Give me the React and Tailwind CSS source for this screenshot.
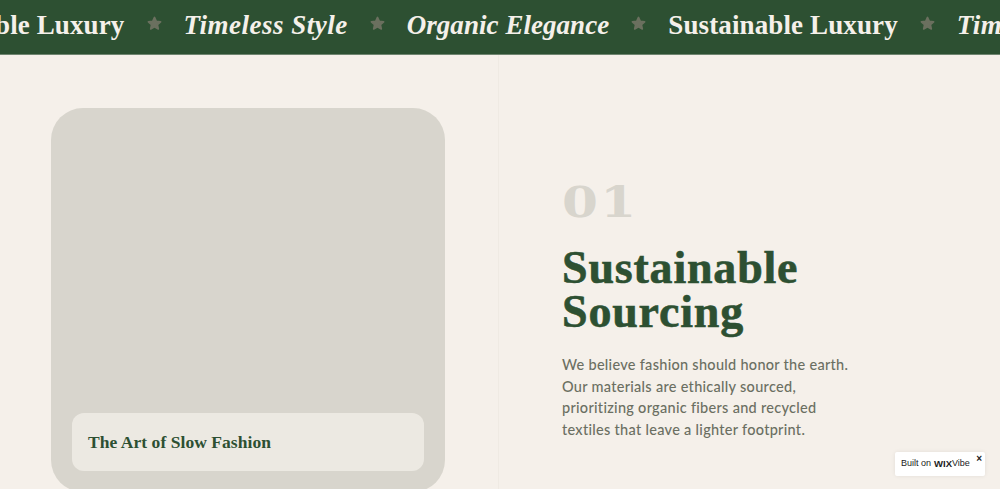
import React from 'react';

const serif = "font-['Liberation_Serif',serif]";

function Star() {
    return (
        <svg viewBox="0 0 24 24" className="w-[15px] h-[15px] shrink-0 -mt-[7px] fill-[#6b705f]">
            <path d="M12 2.2l2.9 6.3 6.9.8-5.1 4.7 1.4 6.8L12 17.4l-6.1 3.4 1.4-6.8-5.1-4.7 6.9-.8z" stroke="#6b705f" strokeWidth="2.6" strokeLinejoin="round" />
        </svg>
    );
}

function Phrase({ children, className }) {
    return (
        <span className={`${serif} shrink-0 whitespace-nowrap text-[27px] leading-[32px] -mt-[5px] font-bold text-[#f5f0ea] ${className}`}>
            {children}
        </span>
    );
}

function Marquee() {
    return (
        <div className="h-[55px] bg-[#2d5032] border-b border-[#6f8570] overflow-hidden flex items-center">
            <div className="flex items-center gap-[22px] -ml-[105px]">
                <Phrase className="tracking-[0.12px]">Sustainable Luxury</Phrase>
                <Star />
                <Phrase className="italic tracking-[0.5px]">Timeless Style</Phrase>
                <Star />
                <Phrase className="italic tracking-[0.05px]">Organic Elegance</Phrase>
                <Star />
                <Phrase className="tracking-[0.12px]">Sustainable Luxury</Phrase>
                <Star />
                <Phrase className="italic tracking-[0.5px]">Timeless Style</Phrase>
            </div>
        </div>
    );
}

export default function App() {
    return (
        <div className="relative h-[489px] overflow-hidden bg-[#f5f0ea]">
            <Marquee />
            <div className="flex h-[434px]">
                {/* Image column */}
                <div className="w-[499px] shrink-0 border-r border-[#efeae3] pt-[53px] pl-[51px]">
                    <div className="w-[394px] h-[384px] rounded-[32px] bg-[#d8d5cd] flex flex-col justify-end px-[21px] pb-[21px]">
                        <div className="h-[58px] rounded-[12px] bg-[#ece9e2] flex items-center pl-[16px]">
                            <span className={`${serif} text-[17.5px] font-bold tracking-[0.05px] text-[#2d5032]`}>The Art of Slow Fashion</span>
                        </div>
                    </div>
                </div>

                {/* Copy column */}
                <div className="flex-1 pl-[63px] pt-[118px]">
                    <div className="font-['DejaVu_Serif',serif] text-[43px] leading-[58px] font-bold text-[#d8d5cd] tracking-[2px] origin-left scale-x-[1.2]">01</div>
                    <h2 className={`${serif} mt-[15px] text-[46px] leading-[44px] font-bold tracking-[0.8px] text-[#2d5032] [-webkit-text-stroke:0.6px_#2d5032]`}>
                        Sustainable<br />Sourcing
                    </h2>
                    <p className="mt-[20px] w-[300px] font-['Lato',sans-serif] text-[14.5px] leading-[21.6px] font-medium tracking-[0.29px] text-[#6b6f62]">
                        We believe fashion should honor the earth. Our materials are ethically sourced, prioritizing organic fibers and recycled textiles that leave a lighter footprint.
                    </p>
                </div>
            </div>

            {/* Wix badge */}
            <div className="absolute left-[895px] top-[452px] w-[90px] h-[24px] bg-white rounded-[2px] shadow-[0_0_4px_rgba(0,0,0,0.08)] flex items-center pl-[6px] font-['Liberation_Sans',sans-serif] text-[9px] text-[#222]">
                <span>Built on</span>
                <span className="ml-[3px] font-bold text-[9.5px]">WIX</span>
                <span>Vibe</span>
                <span className="absolute right-[3px] top-[2px] text-[10px] leading-[10px] font-bold">×</span>
            </div>
        </div>
    );
}
